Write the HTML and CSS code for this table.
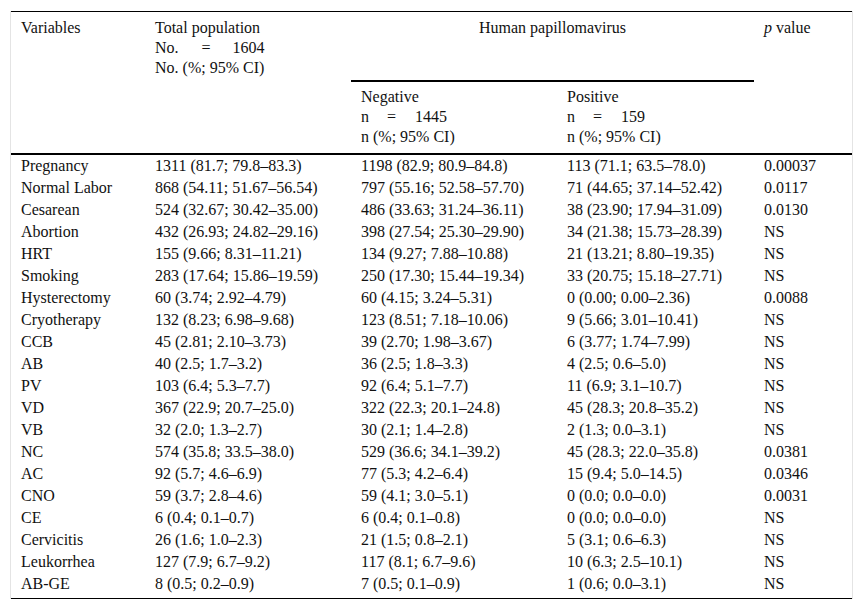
FILE: index.html
```html
<!DOCTYPE html>
<html>
<head>
<meta charset="utf-8">
<link rel="stylesheet" href="styles.css">
</head>
<body>
<div class="wrap">
<table class="tbl">
<colgroup>
<col class="c1"><col class="c2"><col class="c3"><col class="c4"><col class="c5">
</colgroup>
<thead>
<tr>
<th rowspan="2" class="hb top">Variables</th>
<th rowspan="2" class="hb top">Total population<br>No.<span class="eq">=</span>1604<br>No. (%; 95% CI)</th>
<th colspan="2" class="hpv">Human papillomavirus</th>
<th rowspan="2" class="hb top"><i>p</i> value</th>
</tr>
<tr>
<th class="sub hb">Negative<br>n<span class="eqn">=</span>1445<br>n (%; 95% CI)</th>
<th class="sub hb">Positive<br>n<span class="eqn">=</span>159<br>n (%; 95% CI)</th>
</tr>
</thead>
<tbody>
<tr><td>Pregnancy</td><td>1311 (81.7; 79.8–83.3)</td><td>1198 (82.9; 80.9–84.8)</td><td>113 (71.1; 63.5–78.0)</td><td>0.00037</td></tr>
<tr><td>Normal Labor</td><td>868 (54.11; 51.67–56.54)</td><td>797 (55.16; 52.58–57.70)</td><td>71 (44.65; 37.14–52.42)</td><td>0.0117</td></tr>
<tr><td>Cesarean</td><td>524 (32.67; 30.42–35.00)</td><td>486 (33.63; 31.24–36.11)</td><td>38 (23.90; 17.94–31.09)</td><td>0.0130</td></tr>
<tr><td>Abortion</td><td>432 (26.93; 24.82–29.16)</td><td>398 (27.54; 25.30–29.90)</td><td>34 (21.38; 15.73–28.39)</td><td>NS</td></tr>
<tr><td>HRT</td><td>155 (9.66; 8.31–11.21)</td><td>134 (9.27; 7.88–10.88)</td><td>21 (13.21; 8.80–19.35)</td><td>NS</td></tr>
<tr><td>Smoking</td><td>283 (17.64; 15.86–19.59)</td><td>250 (17.30; 15.44–19.34)</td><td>33 (20.75; 15.18–27.71)</td><td>NS</td></tr>
<tr><td>Hysterectomy</td><td>60 (3.74; 2.92–4.79)</td><td>60 (4.15; 3.24–5.31)</td><td>0 (0.00; 0.00–2.36)</td><td>0.0088</td></tr>
<tr><td>Cryotherapy</td><td>132 (8.23; 6.98–9.68)</td><td>123 (8.51; 7.18–10.06)</td><td>9 (5.66; 3.01–10.41)</td><td>NS</td></tr>
<tr><td>CCB</td><td>45 (2.81; 2.10–3.73)</td><td>39 (2.70; 1.98–3.67)</td><td>6 (3.77; 1.74–7.99)</td><td>NS</td></tr>
<tr><td>AB</td><td>40 (2.5; 1.7–3.2)</td><td>36 (2.5; 1.8–3.3)</td><td>4 (2.5; 0.6–5.0)</td><td>NS</td></tr>
<tr><td>PV</td><td>103 (6.4; 5.3–7.7)</td><td>92 (6.4; 5.1–7.7)</td><td>11 (6.9; 3.1–10.7)</td><td>NS</td></tr>
<tr><td>VD</td><td>367 (22.9; 20.7–25.0)</td><td>322 (22.3; 20.1–24.8)</td><td>45 (28.3; 20.8–35.2)</td><td>NS</td></tr>
<tr><td>VB</td><td>32 (2.0; 1.3–2.7)</td><td>30 (2.1; 1.4–2.8)</td><td>2 (1.3; 0.0–3.1)</td><td>NS</td></tr>
<tr><td>NC</td><td>574 (35.8; 33.5–38.0)</td><td>529 (36.6; 34.1–39.2)</td><td>45 (28.3; 22.0–35.8)</td><td>0.0381</td></tr>
<tr><td>AC</td><td>92 (5.7; 4.6–6.9)</td><td>77 (5.3; 4.2–6.4)</td><td>15 (9.4; 5.0–14.5)</td><td>0.0346</td></tr>
<tr><td>CNO</td><td>59 (3.7; 2.8–4.6)</td><td>59 (4.1; 3.0–5.1)</td><td>0 (0.0; 0.0–0.0)</td><td>0.0031</td></tr>
<tr><td>CE</td><td>6 (0.4; 0.1–0.7)</td><td>6 (0.4; 0.1–0.8)</td><td>0 (0.0; 0.0–0.0)</td><td>NS</td></tr>
<tr><td>Cervicitis</td><td>26 (1.6; 1.0–2.3)</td><td>21 (1.5; 0.8–2.1)</td><td>5 (3.1; 0.6–6.3)</td><td>NS</td></tr>
<tr><td>Leukorrhea</td><td>127 (7.9; 6.7–9.2)</td><td>117 (8.1; 6.7–9.6)</td><td>10 (6.3; 2.5–10.1)</td><td>NS</td></tr>
<tr class="last"><td>AB-GE</td><td>8 (0.5; 0.2–0.9)</td><td>7 (0.5; 0.1–0.9)</td><td>1 (0.6; 0.0–3.1)</td><td>NS</td></tr>
</tbody>
</table>
</div>
</body>
</html>
```

FILE: styles.css
```css
html, body {
  margin: 0;
  padding: 0;
  background: #fff;
}
body {
  padding: 11px 0 0 10px;
  font-family: "Liberation Serif", "Times New Roman", serif;
  font-size: 16px;
  color: #111;
}
.wrap {
  width: 841px;
  border-left: 1px solid #e4e4e4;
  border-right: 1px solid #e4e4e4;
}
.tbl {
  width: 841px;
  border-collapse: separate;
  border-spacing: 0;
  table-layout: fixed;
  border-top: 1px solid #000;
  border-bottom: 1px solid #000;
}
.c1 { width: 134px; }
.c2 { width: 206px; }
.c3 { width: 206px; }
.c4 { width: 197px; }
.c5 { width: 98px; }
th {
  font-weight: normal;
  text-align: left;
  vertical-align: top;
  line-height: 20px;
  padding: 5px 10px 6px 10px;
}
th.top {
  padding-top: 6px;
}
th.hb {
  border-bottom: 2px solid #000;
}
th.hpv {
  text-align: center;
  padding: 6px 10px 42px 10px;
  border-bottom: 2px solid #000;
}
.eq {
  margin: 0 22px 0 23px;
}
.eqn {
  margin: 0 19px 0 18px;
}
td {
  height: 22px;
  line-height: 22px;
  padding: 0 10px;
  white-space: nowrap;
  vertical-align: middle;
}
tr.last td {
  padding-bottom: 3px;
}
```
